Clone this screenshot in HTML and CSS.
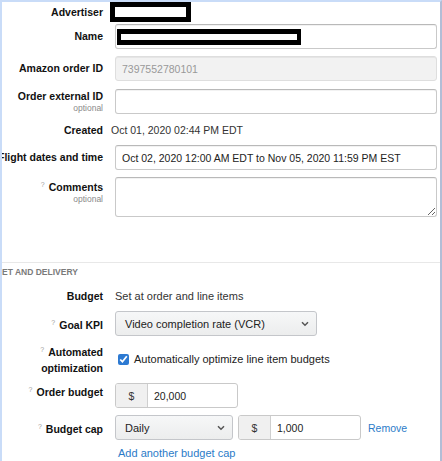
FILE: index.html
```html
<!DOCTYPE html>
<html lang="en">
<head>
    <meta charset="UTF-8">
    <title>Order settings</title>
    <link rel="stylesheet" href="styles.css">
</head>
<body>
<div class="page">
    <div class="row row-advertiser">
        <div class="label">Advertiser</div>
        <div class="control"><span class="redact redact-adv"></span></div>
    </div>

    <div class="row row-name">
        <div class="label">Name</div>
        <div class="control">
            <div class="field"><span class="redact redact-name"></span></div>
        </div>
    </div>

    <div class="row row-gap7">
        <div class="label">Amazon order ID</div>
        <div class="control"><input class="input readonly" type="text" value="7397552780101" readonly></div>
    </div>

    <div class="row row-gap8">
        <div class="label">Order external ID<span class="optional">optional</span></div>
        <div class="control"><input class="input" type="text"></div>
    </div>

    <div class="row row-created">
        <div class="label">Created</div>
        <div class="control value value-created">Oct 01, 2020 02:44 PM EDT</div>
    </div>

    <div class="row row-gap8">
        <div class="label">Flight dates and time</div>
        <div class="control"><input class="input" type="text" value="Oct 02, 2020 12:00 AM EDT to Nov 05, 2020 11:59 PM EST"></div>
    </div>

    <div class="row row-gap7 row-top">
        <div class="label label-top"><span class="line"><span class="help">?</span>Comments</span><span class="optional">optional</span></div>
        <div class="control"><textarea class="input textarea"></textarea></div>
    </div>

    <hr class="divider">
    <div class="section-title"><span>BUDGET AND DELIVERY</span></div>

    <div class="row row-budget">
        <div class="label">Budget</div>
        <div class="control value text-wide">Set at order and line items</div>
    </div>

    <div class="row row-gap8">
        <div class="label"><span class="line"><span class="help">?</span>Goal KPI</span></div>
        <div class="control">
            <div class="select select-kpi text-wide">
                <span>Video completion rate (VCR)</span>
                <svg width="8" height="6" viewBox="0 0 8 6"><path d="M1 1.2 L4 4.2 L7 1.2" fill="none" stroke="#555" stroke-width="1.5"/></svg>
            </div>
        </div>
    </div>

    <div class="row row-auto">
        <div class="label label-two"><span class="line"><span class="help">?</span>Automated</span><span class="line">optimization</span></div>
        <div class="control">
            <label class="check text-wide"><input type="checkbox" checked> Automatically optimize line item budgets</label>
        </div>
    </div>

    <div class="row row-gap7">
        <div class="label label-raised"><span class="line"><span class="help">?</span>Order budget</span></div>
        <div class="control">
            <div class="money"><span class="addon">$</span><span class="money-value">20,000</span></div>
        </div>
    </div>

    <div class="row row-gap7">
        <div class="label"><span class="line"><span class="help">?</span>Budget cap</span></div>
        <div class="control cap-line">
            <div class="select select-cap text-wide">
                <span>Daily</span>
                <svg width="8" height="6" viewBox="0 0 8 6"><path d="M1 1.2 L4 4.2 L7 1.2" fill="none" stroke="#555" stroke-width="1.5"/></svg>
            </div>
            <div class="money"><span class="addon">$</span><span class="money-value">1,000</span></div>
            <a class="link remove" href="#">Remove</a>
        </div>
    </div>

    <div class="row row-add">
        <div class="label"></div>
        <div class="control"><a class="link add text-wide" href="#">Add another budget cap</a></div>
    </div>
</div>
</body>
</html>
```

FILE: styles.css
```css
/* Reset */
html, body {
    margin: 0;
    padding: 0;
    background-color: #fff;
}

body {
    font-family: "Liberation Sans", Arial, sans-serif;
    font-size: 10.5px;
    color: #111;
}

/* Outer frame of the captured window */
.page {
    height: 461px;
    box-sizing: border-box;
    border-top: 2px solid #c9dcf8;
    border-left: 2px solid #c9dcf8;
    border-right: 2px solid #b3bdd6;
    overflow: hidden;
}

/* Form rows: label column + control column */
.row {
    display: flex;
    align-items: center;
}

.row-top {
    align-items: flex-start;
}

.label {
    width: 101px;
    flex: none;
    display: flex;
    flex-direction: column;
    align-items: flex-end;
    font-weight: bold;
    line-height: 13px;
    white-space: nowrap;
}

.label-top {
    padding-top: 1px;
}

.label-two {
    line-height: 16px;
}

.label-raised {
    margin-top: -10px;
}

.optional {
    font-size: 8.5px;
    font-weight: normal;
    color: #8a8a8a;
    line-height: 11px;
}

.help {
    font-size: 7px;
    font-weight: normal;
    color: #a0a0a0;
    vertical-align: 4px;
    margin-right: 4px;
}

.control {
    flex: 1;
    min-width: 0;
    margin-left: 12px;
    margin-right: 3px;
}

.value {
    color: #333;
    line-height: 14px;
}

.value-created {
    margin-left: 8px;
}

/* Letter-heavy text runs a little wider */
.text-wide {
    font-size: 11px;
}

/* Row spacing */
.row-name { margin-top: 2px; }
.row-gap7 { margin-top: 7px; }
.row-gap8 { margin-top: 8px; }
.row-created { margin-top: 9px; }
.row-budget { margin-top: 11px; }
.row-auto { margin-top: 6px; }
.row-add { margin-top: 6px; }

/* Redaction boxes */
.redact {
    display: inline-block;
    box-sizing: border-box;
    border: 5px solid #000;
    background: #fff;
    vertical-align: middle;
}

.redact-adv {
    width: 81px;
    height: 20px;
    margin-left: -5px;
}

.redact-name {
    width: 184px;
    height: 16px;
    border-width: 5px 4px;
}

/* Inputs */
.input,
.field {
    display: block;
    width: 100%;
    height: 25px;
    box-sizing: border-box;
    border: 1px solid #c9c9c9;
    border-top-color: #b9b9b9;
    border-radius: 3px;
    box-shadow: inset 0 1px 0 rgba(0, 0, 0, 0.05);
    padding: 0 6px;
    font-family: inherit;
    font-size: 10.5px;
    color: #222;
    background: #fff;
    outline: none;
}

.field {
    display: flex;
    align-items: center;
    padding: 0 0 0 1px;
}

.readonly {
    background: #f2f2f2;
    color: #999;
    border-color: #dedede;
}

.textarea {
    height: 40px;
    resize: vertical;
    padding: 4px 6px;
}

/* Section */
.divider {
    margin: 45px 0 0 0;
    border: none;
    border-top: 1px solid #e8e8e8;
}

.section-title {
    margin-top: 3px;
    font-size: 8.5px;
    font-weight: bold;
    color: #7a7a7a;
    line-height: 12px;
    white-space: nowrap;
}

.section-title span {
    display: inline-block;
    margin-left: -25px;
}

/* Dropdown buttons */
.select {
    display: flex;
    align-items: center;
    justify-content: space-between;
    height: 25px;
    box-sizing: border-box;
    padding: 0 7px 0 9px;
    border: 1px solid #c4c6ca;
    border-radius: 3px;
    background: linear-gradient(#f6f7f8, #eceded);
    color: #222;
}

.select-kpi {
    width: 202px;
}

.select-cap {
    width: 118px;
}

/* Checkbox */
.check {
    display: flex;
    align-items: center;
    gap: 5px;
    color: #222;
}

.check input {
    width: 11px;
    height: 11px;
    margin: 0 0 0 3px;
    accent-color: #2d7ad2;
}

/* Currency input */
.money {
    display: flex;
    width: 123px;
    height: 25px;
    box-sizing: border-box;
    border: 1px solid #c9c9c9;
    border-radius: 3px;
    overflow: hidden;
}

.addon {
    width: 31px;
    flex: none;
    display: flex;
    align-items: center;
    justify-content: center;
    background: #f0f0f0;
    border-right: 1px solid #cfcfcf;
    color: #333;
}

.money-value {
    display: flex;
    align-items: center;
    padding-left: 6px;
    color: #222;
}

.cap-line {
    display: flex;
    align-items: center;
    gap: 5px;
}

/* Links */
.link {
    color: #2b7bc8;
    text-decoration: none;
    line-height: 14px;
}

.remove {
    margin-left: 2px;
}

.add {
    padding-left: 3px;
}
```
